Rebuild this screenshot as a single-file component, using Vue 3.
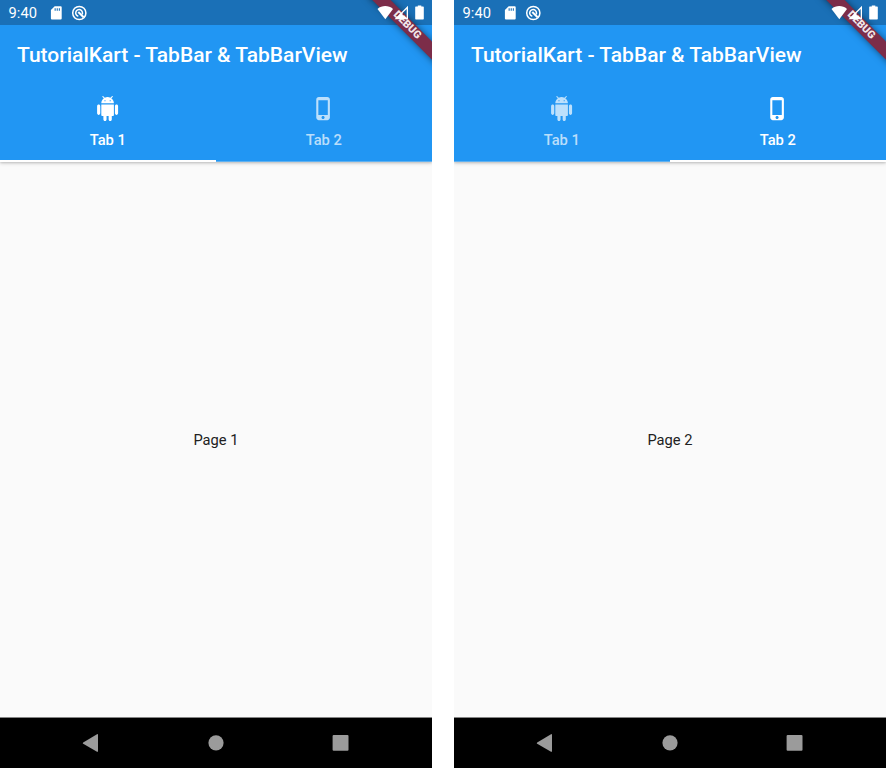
<script setup>
const screens = [
  { id: 1, active: 0, page: 'Page 1' },
  { id: 2, active: 1, page: 'Page 2' },
]
const tabs = [
  {
    label: 'Tab 1',
    icon: 'M6 18c0 .55.45 1 1 1h1v3.500c0 .83.67 1.500 1.500 1.500s1.500-.67 1.500-1.500V19h2v3.500c0 .83.67 1.500 1.500 1.500s1.500-.67 1.500-1.500V19h1c.55 0 1-.45 1-1V8H6v10zM3.500 8C2.670 8 2 8.670 2 9.500v7c0 .83.67 1.500 1.500 1.500S5 17.330 5 16.500v-7C5 8.670 4.330 8 3.500 8zm17 0c-.83 0-1.500.67-1.500 1.500v7c0 .83.67 1.500 1.500 1.500s1.500-.67 1.500-1.500v-7c0-.83-.67-1.500-1.500-1.500zm-4.970-5.840l1.300-1.300c.2-.2.2-.51 0-.71-.2-.2-.51-.2-.71 0l-1.480 1.480C13.850 1.230 12.950 1 12 1c-.96 0-1.860.23-2.660.63L7.850.15c-.2-.2-.51-.2-.71 0-.2.2-.2.51 0 .71l1.310 1.310C6.970 3.260 6 5.010 6 7h12c0-1.990-.97-3.750-2.470-4.840zM10 5H9V4h1v1zm5 0h-1V4h1v1z',
  },
  {
    label: 'Tab 2',
    icon: 'M15.500 1h-8C6.120 1 5 2.120 5 3.500v17C5 21.880 6.120 23 7.500 23h8c1.380 0 2.500-1.120 2.500-2.500v-17C18 2.120 16.880 1 15.500 1zm-4 21c-.83 0-1.500-.67-1.500-1.500s.67-1.500 1.500-1.500 1.500.67 1.500 1.500-.67 1.500-1.500 1.500zm4.500-4H7V4h9v14z',
  },
]
</script>

<template>
  <main class="board">
    <section v-for="s in screens" :key="s.id" class="phone">
      <header class="header">
        <div class="status">
          <span class="clock">9:40</span>
          <svg class="sd" width="12" height="14" viewBox="0 0 12 14">
            <path fill="#fff" fill-rule="evenodd" d="M4.700.3H10.700Q11.700.3 11.700 1.300V12.400Q11.700 13.400 10.700 13.400H1.900Q.9 13.400.9 12.400V4.100ZM4.600 2.300V4.700H5.700V2.300ZM6.700 2.300V4.700H7.800V2.300ZM8.800 2.300V4.700H9.900V2.300Z" />
          </svg>
          <svg class="sync" width="16" height="16" viewBox="0 0 16 16" fill="none" stroke="#fff">
            <circle cx="8.300" cy="8" r="6.600" stroke-width="1.500" />
            <path d="M11.200 9.400A3.400 3.400 0 1 0 7.300 11.300" stroke-width="1.500" />
            <path d="M7.300 7L12.600 12.300" stroke-width="2" />
          </svg>
        </div>
        <h1 class="title">TutorialKart - TabBar &amp; TabBarView</h1>
        <nav class="tabs">
          <div v-for="(t, i) in tabs" :key="t.label" class="tab" :class="{ active: s.active === i }">
            <svg class="tab-icon" viewBox="0 0 24 24"><path :d="t.icon" /></svg>
            <span class="tab-label">{{ t.label }}</span>
          </div>
        </nav>
      </header>
      <div class="page">{{ s.page }}</div>
      <footer class="nav">
        <svg width="432" height="50" viewBox="0 0 432 50" fill="#9b9b9b">
          <path d="M97 16.200Q98 15.800 98 16.800V33.200Q98 34.200 97 33.700L83.200 25.700Q82.200 25 83.200 24.400Z" />
          <circle cx="216" cy="24.800" r="7.600" />
          <rect x="332.600" y="17" width="15.900" height="15.700" rx="1" />
        </svg>
      </footer>
      <div class="corner">
        <div class="banner">DEBUG</div>
      </div>
      <svg class="signals" width="56" height="25" viewBox="0 0 56 25" fill="#fff">
        <path d="M1.500 8.900C6 5.100 12.500 5.100 17 8.900L9.300 19.200Z" />
        <path fill-rule="evenodd" d="M32 5.800V19.300H18.500ZM30.700 9L26.600 13.100V15L30.700 18Z" />
        <path d="M41.800 6.400H39.800Q39.200 6.400 39.200 7.100V18.700Q39.200 19.400 39.900 19.400H47.100Q47.800 19.400 47.800 18.700V7.100Q47.800 6.400 47.100 6.400H45.300V5.400H41.800Z" />
      </svg>
    </section>
  </main>
</template>

<style>
body {
  background: #fff;
}
</style>

<style scoped>
.board {
  display: flex;
  gap: 22px;
  width: 886px;
  height: 768px;
  font-family: Roboto, sans-serif;
}
.phone {
  position: relative;
  display: flex;
  flex-direction: column;
  width: 432px;
  height: 768px;
  overflow: hidden;
  background: #fafafa;
}
.header {
  display: flex;
  flex-direction: column;
  height: 162px;
  flex: none;
  color: #fff;
  background: linear-gradient(#2196f3 161px, #5fb1f1 161px);
  box-shadow: 0 1px 4px rgba(0, 0, 0, 0.2), 0 1px 2px rgba(0, 0, 0, 0.1);
}
.status {
  display: flex;
  align-items: center;
  height: 25px;
  background: #1a70b7;
}
.clock {
  width: 41px;
  padding-left: 8.500px;
  font-size: 14.700px;
  letter-spacing: 0.1px;
  line-height: 25px;
  padding-top: 1px;
}
.sd {
  margin-right: 9px;
}
.title {
  height: 59px;
  margin: 0;
  padding-left: 17px;
  font-size: 21px;
  font-weight: 500;
  line-height: 60px;
  white-space: nowrap;
}
.tabs {
  display: flex;
  flex: 1;
}
.tab {
  box-sizing: border-box;
  display: flex;
  flex: 1;
  flex-direction: column;
  align-items: center;
  padding-top: 11.800px;
  border-bottom: 2px solid transparent;
  color: rgba(255, 255, 255, 0.7);
}
.tab.active {
  color: #fff;
  border-bottom-color: #fff;
}
.tab-icon {
  width: 25.200px;
  height: 25.200px;
  fill: currentColor;
}
.tab-label {
  margin: 11px 0.500px 0 0;
  font-size: 14.700px;
  font-weight: 500;
  line-height: 17px;
}
.page {
  display: flex;
  flex: 1;
  align-items: center;
  justify-content: center;
  font-size: 14.700px;
  color: #212121;
}
.nav {
  flex: none;
  height: 51px;
  background: #000;
  border-top: 1px solid #858585;
  box-sizing: border-box;
}
.nav svg {
  display: block;
}
.corner {
  position: absolute;
  top: 0;
  right: 0;
  width: 90px;
  height: 90px;
  overflow: hidden;
}
.banner {
  position: absolute;
  left: 15.300px;
  top: 18.500px;
  width: 100px;
  height: 12.600px;
  background: #7c2d49;
  box-shadow: 0 0 7px rgba(0, 0, 0, 0.5);
  color: #f1e7ea;
  font-size: 10.700px;
  font-weight: 900;
  line-height: 12.600px;
  text-align: center;
  transform: rotate(45deg);
}
.signals {
  position: absolute;
  top: 0;
  right: 0;
}
</style>
